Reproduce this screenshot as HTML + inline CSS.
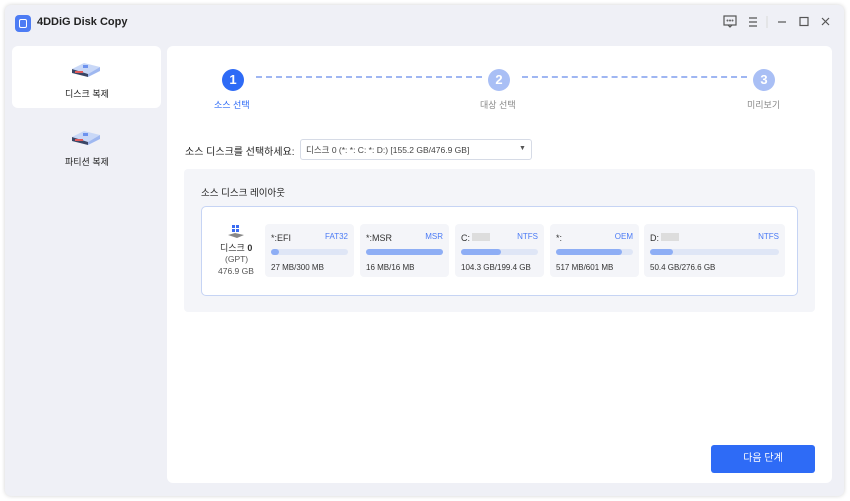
<!DOCTYPE html>
<html><head><meta charset="utf-8"><style>
*{margin:0;padding:0;box-sizing:border-box}
body{width:850px;height:501px;background:#fff;font-family:"Liberation Sans","Noto Sans CJK KR",sans-serif;position:relative;overflow:hidden;color:#222}
.win{position:absolute;left:5px;top:5px;width:839px;height:491px;background:#eff0f6;border-radius:6px;box-shadow:0 0 4px rgba(0,0,0,.18)}
.abs{position:absolute}
.card{position:absolute;background:#fff;border-radius:6px}
.t{position:absolute;white-space:nowrap}
.part{position:absolute;top:224px;height:53px;background:#f4f5f9;border-radius:4px}
.part .n{position:absolute;left:6px;top:9px;font-size:9px;color:#333}
.part .f{position:absolute;right:6px;top:8px;font-size:8px;color:#4a7af5}
.part .b{position:absolute;left:6px;right:6px;top:25px;height:6px;background:#dfe6f6;border-radius:3px}
.part .b i{display:block;height:6px;background:#8eaef5;border-radius:3px}
.part .s{position:absolute;left:6px;top:39px;font-size:8px;color:#333}
.circ{position:absolute;width:22px;height:22px;border-radius:50%;color:#fff;font-weight:bold;font-size:13px;text-align:center;line-height:22px}
.dash{position:absolute;top:76px;height:0;border-top:2px dashed #9fb6f2}
</style></head><body>
<div class="win">
<div class="abs" style="left:10px;top:10px;width:16px;height:17px;background:#4d7cf4;border-radius:4px"><div style="position:absolute;left:4px;top:4px;width:8px;height:9px;border:1.5px solid #fff;border-radius:2px"></div></div>
<div class="t" style="left:32px;top:11px;font-size:11px;font-weight:bold;color:#222">4DDiG Disk Copy</div>
<svg class="abs" style="left:718px;top:10px" width="110" height="14" viewBox="0 0 110 14" fill="none" stroke="#555" stroke-width="1.2">
<rect x="1" y="1" width="12" height="9"/><path d="M5 10l2 2 2-2"/><circle cx="4.5" cy="5.5" r=".4"/><circle cx="7" cy="5.5" r=".4"/><circle cx="9.5" cy="5.5" r=".4"/>
<path d="M26 3h8M26 7h8M26 11h8"/><path d="M44 1v12" stroke="#ddd"/><path d="M55 7h8"/><rect x="77" y="2.5" width="8" height="8"/><path d="M99 3l7 7M106 3l-7 7"/></svg>
</div>
<div class="card" style="left:12px;top:46px;width:149px;height:62px"></div>
<svg class="abs" style="left:70px;top:60px" width="32" height="18" viewBox="0 0 32 18"><path d="M2 9l12-6 16 4-12 7z" fill="#c9d8f7"/><path d="M2 9v4l16 4v-3z" fill="#3a4666"/><path d="M18 14v3l12-6V7z" fill="#9fb8f0"/><rect x="5" y="11" width="8" height="2" fill="#e05a5a"/><rect x="13" y="5" width="5" height="3" fill="#6d92ee"/></svg>
<div class="t" style="left:65px;top:87px;font-size:9px;color:#222">디스크 복제</div>
<svg class="abs" style="left:70px;top:128px" width="32" height="18" viewBox="0 0 32 18"><path d="M2 9l12-6 16 4-12 7z" fill="#c9d8f7"/><path d="M2 9v4l16 4v-3z" fill="#3a4666"/><path d="M18 14v3l12-6V7z" fill="#9fb8f0"/><rect x="5" y="11" width="8" height="2" fill="#e05a5a"/><rect x="13" y="5" width="5" height="3" fill="#6d92ee"/></svg>
<div class="t" style="left:65px;top:155px;font-size:9px;color:#222">파티션 복제</div>
<div class="card" style="left:167px;top:46px;width:665px;height:437px"></div>
<div class="circ" style="left:222px;top:69px;background:#2e6bf6">1</div>
<div class="circ" style="left:488px;top:69px;background:#a9bff5">2</div>
<div class="circ" style="left:753px;top:69px;background:#a9bff5">3</div>
<div class="dash" style="left:256px;width:226px"></div>
<div class="dash" style="left:522px;width:225px"></div>
<div class="t" style="left:214px;top:98px;font-size:9px;color:#2e6bf6">소스 선택</div>
<div class="t" style="left:480px;top:98px;font-size:9px;color:#888">대상 선택</div>
<div class="t" style="left:747px;top:98px;font-size:9px;color:#888">미리보기</div>
<div class="t" style="left:185px;top:143px;font-size:10px;color:#222">소스 디스크를 선택하세요:</div>
<div class="abs" style="left:300px;top:139px;width:232px;height:21px;border:1px solid #d6dbe6;border-radius:3px;background:#fff"></div>
<div class="t" style="left:306px;top:144px;font-size:8.5px;color:#444">디스크 0 (*: *: C: *: D:) [155.2 GB/476.9 GB]</div>
<div class="t" style="left:519px;top:145px;font-size:7px;color:#555">▼</div>
<div class="abs" style="left:184px;top:169px;width:631px;height:143px;background:#f4f5f9;border-radius:4px"></div>
<div class="t" style="left:201px;top:185px;font-size:9.5px;color:#222">소스 디스크 레이아웃</div>
<div class="abs" style="left:201px;top:206px;width:597px;height:90px;background:#fff;border:1px solid #c6d4f4;border-radius:5px"></div>
<svg class="abs" style="left:227px;top:225px" width="18" height="14" viewBox="0 0 18 14"><rect x="5" y="0" width="3" height="3" fill="#3b6cf2"/><rect x="9" y="0" width="3" height="3" fill="#3b6cf2"/><rect x="5" y="4" width="3" height="3" fill="#3b6cf2"/><rect x="9" y="4" width="3" height="3" fill="#3b6cf2"/><path d="M1 10l7-2 9 2-7 3z" fill="#888"/></svg>
<div class="t" style="left:220px;top:241px;font-size:9px;color:#333">디스크 <b>0</b></div>
<div class="t" style="left:225px;top:254px;font-size:8.5px;color:#555">(GPT)</div>
<div class="t" style="left:218px;top:266px;font-size:8.5px;color:#555">476.9 GB</div>
<div class="part" style="left:265px;width:89px"><span class="n">*:EFI</span><span class="f">FAT32</span><div class="b"><i style="width:8px"></i></div><span class="s">27 MB/300 MB</span></div>
<div class="part" style="left:360px;width:89px"><span class="n">*:MSR</span><span class="f">MSR</span><div class="b"><i style="width:100%"></i></div><span class="s">16 MB/16 MB</span></div>
<div class="part" style="left:455px;width:89px"><span class="n">C:<span style="display:inline-block;width:18px;height:8px;background:#ddd;margin-left:2px"></span></span><span class="f">NTFS</span><div class="b"><i style="width:52%"></i></div><span class="s">104.3 GB/199.4 GB</span></div>
<div class="part" style="left:550px;width:89px"><span class="n">*:</span><span class="f">OEM</span><div class="b"><i style="width:86%"></i></div><span class="s">517 MB/601 MB</span></div>
<div class="part" style="left:644px;width:141px"><span class="n">D:<span style="display:inline-block;width:18px;height:8px;background:#ddd;margin-left:2px"></span></span><span class="f">NTFS</span><div class="b"><i style="width:18%"></i></div><span class="s">50.4 GB/276.6 GB</span></div>
<div class="abs" style="left:711px;top:445px;width:104px;height:28px;background:#2e6bf6;border-radius:3px;color:#fff;font-size:10px;text-align:center;line-height:28px">다음 단계</div>
</body></html>
